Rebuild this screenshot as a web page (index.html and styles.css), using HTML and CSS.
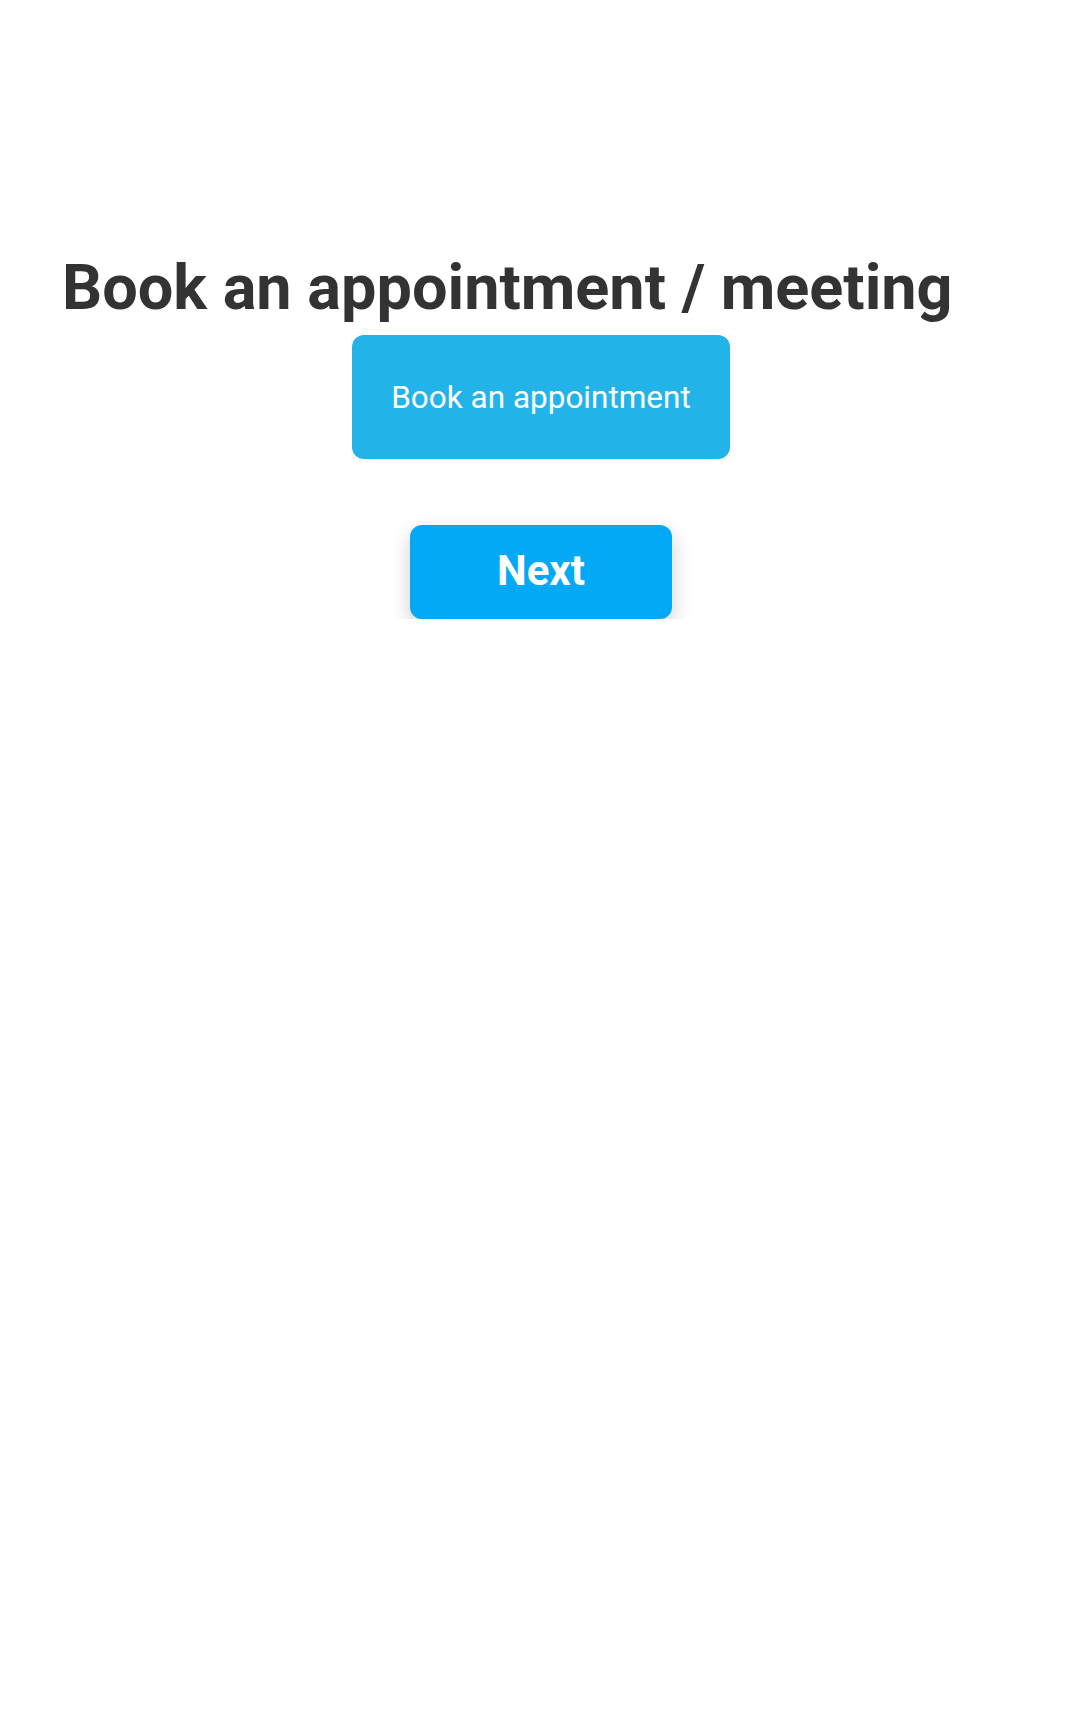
FILE: index.html
```html
<!DOCTYPE html>
<html>
<head>
<meta charset="utf-8">
<link rel="stylesheet" href="styles.css">
</head>
<body>
<main class="page">
  <h1 class="title">Book an appointment / meeting</h1>
  <div class="choices">
    <button class="choice">Book an appointment</button>
  </div>
  <div class="actions">
    <button class="next">Next</button>
  </div>
</main>
</body>
</html>
```

FILE: styles.css
```css
html, body {
  margin: 0;
  padding: 0;
  background: #ffffff;
}
body {
  font-family: Roboto, "Liberation Sans", sans-serif;
}
.page {
  padding: 248px 62px 0 62px;
  display: flex;
  flex-direction: column;
}
.title {
  margin: 0;
  font-size: 63px;
  font-weight: 700;
  color: #333333;
  line-height: 80px;
  white-space: nowrap;
}
.choices {
  display: flex;
  justify-content: center;
  padding-left: 2px;
  margin-top: 7px;
}
.choice {
  width: 378px;
  height: 124px;
  border: none;
  border-radius: 12px;
  background: #22b4e8;
  color: #ffffff;
  font-family: Roboto, "Liberation Sans", sans-serif;
  font-size: 31.5px;
  font-weight: 400;
}
.actions {
  display: flex;
  justify-content: center;
  padding-left: 2px;
  margin-top: 66px;
}
.next {
  width: 262px;
  height: 94px;
  border: none;
  border-radius: 12px;
  background: #03a9f4;
  color: #ffffff;
  font-family: Roboto, "Liberation Sans", sans-serif;
  font-size: 42px;
  font-weight: 700;
  padding-bottom: 4px;
  box-shadow: 0 8px 20px rgba(0, 0, 0, 0.2);
}
```
